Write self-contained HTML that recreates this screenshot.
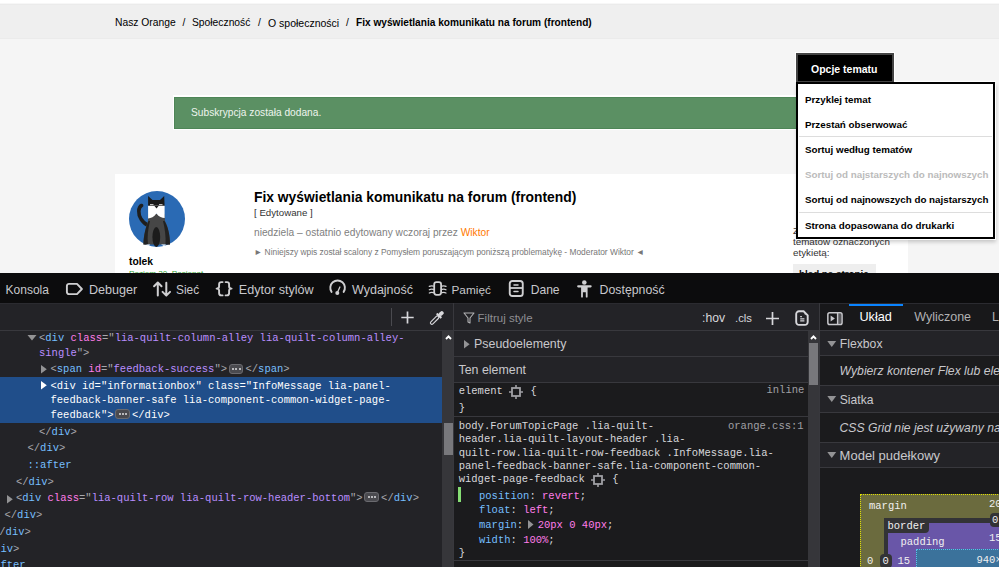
<!DOCTYPE html>
<html><head><meta charset="utf-8">
<style>
*{box-sizing:border-box;margin:0;padding:0}
html,body{width:999px;height:567px;overflow:hidden;background:#f5f5f5;position:relative;font-family:"Liberation Sans",sans-serif}
.a{position:absolute;white-space:pre}
.dd{position:absolute;left:805px;font-size:9.8px;font-weight:bold;line-height:12px;color:#000;white-space:pre}
.sep{position:absolute;left:799px;width:193px;height:1px;background:#ddd}
/* devtools */
#dt{position:absolute;left:0;top:273px;width:999px;height:294px;background:#232327;overflow:hidden}
.mono{font-family:"Liberation Mono",monospace}
.ml{position:absolute;font-family:"Liberation Mono",monospace;font-size:10.5px;line-height:14.5px;white-space:pre;color:#b1b1b3}
.ml .t{color:#75bfff}.ml .n{color:#ff7de9}.ml .v{color:#b98eff}.ml .p{color:#a8a8ad}.ml .w{color:#fff}
.bd{display:inline-block;vertical-align:top;margin:1.7px 2.5px 0 1.5px;width:14.5px;height:10px;border-radius:3px;background:#4a4a4f;border:1px solid #6a6a6f;position:relative}
.bd i{position:absolute;top:3px;width:2px;height:2px;border-radius:1px;background:#e0e0e2}
.bd i:nth-child(1){left:2.5px}.bd i:nth-child(2){left:5.75px}.bd i:nth-child(3){left:9px}
.rl{position:absolute;font-family:"Liberation Mono",monospace;font-size:10.5px;line-height:13.3px;white-space:pre;color:#d7d7db}
.rl.g{color:#a0a0a5}.rl .pn{color:#75bfff}.rl .pv{color:#ff7de9}
.bm{position:absolute;font-family:"Liberation Mono",monospace;font-size:10.5px;line-height:14px;white-space:pre;color:#f0f0f0}
.tb{position:absolute;top:8px;font-size:12px;line-height:15px;color:#c8c8cc;white-space:pre}
</style></head><body>
<!-- PAGE -->
<div class="a" style="left:0;top:0;width:999px;height:3px;background:#fff"></div>
<div class="a" style="left:0;top:3px;width:999px;height:1px;background:#f7f7f7"></div>
<div class="a" style="left:0;top:4px;width:999px;height:1px;background:#ebebeb"></div>
<div class="a" style="left:0;top:5px;width:999px;height:33px;background:#efefef"></div>
<div class="a" style="left:0;top:38px;width:999px;height:1px;background:#ebebeb"></div>
<div class="a" style="left:115px;top:17px;font-size:10.3px;line-height:12px;color:#000">Nasz Orange</div>
<div class="a" style="left:182.5px;top:17px;font-size:10.3px;line-height:12px;color:#000">/</div>
<div class="a" style="left:192px;top:17px;font-size:10.3px;line-height:12px;color:#000">Społeczność</div>
<div class="a" style="left:258px;top:17px;font-size:10.3px;line-height:12px;color:#000">/</div>
<div class="a" style="left:268px;top:16.5px;font-size:10.5px;line-height:12px;color:#000">O społeczności</div>
<div class="a" style="left:346px;top:17px;font-size:10.3px;line-height:12px;color:#000">/</div>
<div class="a" style="left:356px;top:17px;font-size:10.13px;line-height:12px;color:#000;font-weight:bold">Fix wyświetlania komunikatu na forum (frontend)</div>

<div class="a" style="left:173px;top:95px;width:630px;height:35px;background:#fff"></div>
<div class="a" style="left:174px;top:97px;width:629px;height:32px;background:#5b9063;border:1px solid #4e8557;border-right:none"></div>
<div class="a" style="left:191px;top:107px;font-size:10.2px;line-height:12px;color:#eef4ee">Subskrypcja została dodana.</div>

<div class="a" style="left:115px;top:174px;width:793px;height:99px;background:#fff"></div>
<svg class="a" style="left:129px;top:191px" width="56" height="56" viewBox="0 0 56 56">
<circle cx="28" cy="28" r="28" fill="#2a6ab4"/>
<path d="M12.6 14.5 C9 16 9 24 12 28 C14 31 16 33 18.5 34" stroke="#1e1e1e" stroke-width="3.6" fill="none" stroke-linecap="round"/>
<path d="M19 23 L35.5 23 L36 30 C39 36 41 44 41 53.5 L14.5 53.5 C14.5 44 17 36 19 30 Z" fill="#464646"/>
<path d="M14.5 53.5 C14.5 44 17 36 19.5 30 L21 30 C19 38 18 46 19 53.5 Z" fill="#222"/>
<path d="M41 53.5 C41 44 39 36 35.5 30 L34 30 C36 38 37 46 36.5 53.5 Z" fill="#222"/>
<ellipse cx="27.3" cy="46" rx="3.9" ry="10" fill="#1c1c1c"/>
<path d="M19.1 4.9 L23.5 9 L31 9 L35.2 4.9 L35.6 15 L19.1 15 Z" fill="#1a1a1a"/>
<path d="M19.1 14.8 L35.6 14.8 L35.6 27 C33 27 30 26 27.4 22.5 C25 26 22 27 19.1 27.5 Z" fill="#fff"/>
<path d="M25.5 15 L29.5 15 L27.5 17.5 Z" fill="#1a1a1a"/>
<rect x="21" y="13" width="3.5" height="1.2" fill="#bbb"/><rect x="30" y="13" width="3.5" height="1.2" fill="#bbb"/>
<path d="M17 53.5 L21 53.5 L20 55 Z M32 53.5 L37 53.5 L35 55 Z" fill="#fff"/>
</svg>
<div class="a" style="left:129px;top:256px;font-size:10.3px;line-height:12px;font-weight:bold;color:#000">tolek</div>
<div class="a" style="left:129px;top:269px;font-size:8.1px;line-height:10px;color:#2f9f2f">Poziom 20, Pasjonat</div>

<div class="a" style="left:254px;top:188.5px;font-size:13.85px;line-height:16px;font-weight:bold;color:#000">Fix wyświetlania komunikatu na forum (frontend)</div>
<div class="a" style="left:254px;top:207px;font-size:9.7px;line-height:12px;color:#333">[ Edytowane ]</div>
<div class="a" style="left:254px;top:226.5px;font-size:10.2px;line-height:12px;color:#808080">niedziela – ostatnio edytowany wczoraj przez <span style="color:#ff7900">Wiktor</span></div>
<div class="a" style="left:254px;top:247px;font-size:8.4px;line-height:10px;color:#777">► Niniejszy wpis został scalony z Pomysłem poruszającym poniższą problematykę - Moderator Wiktor ◄</div>

<div class="a" style="left:793px;top:225px;font-size:9.8px;line-height:11px;color:#333">Z
tematów oznaczonych
etykietą:</div>
<div class="a" style="left:793px;top:264px;width:83px;height:12px;background:#eee"></div>
<div class="a" style="left:799px;top:267.5px;font-size:9.8px;line-height:11px;font-weight:bold;color:#111">blad na stronie</div>

<!-- dropdown -->
<div class="a" style="left:796px;top:82px;width:199px;height:157px;background:#fff;border:2px solid #000;box-shadow:1px 1px 0 0 #fff,1px 3px 4px rgba(0,0,0,.2)"></div>
<div class="a" style="left:894px;top:81px;width:102px;height:1px;background:#fff"></div>
<div class="a" style="left:795px;top:52px;width:100px;height:30px;background:#fff"></div>
<div class="a" style="left:796px;top:53px;width:98px;height:29px;background:#000;border:2px solid #444;border-bottom:1px solid #444"></div>
<div class="a" style="left:811px;top:62.5px;font-size:10.5px;line-height:12px;font-weight:bold;color:#fff">Opcje tematu</div>
<div class="dd" style="top:93.5px">Przyklej temat</div>
<div class="dd" style="top:118.7px">Przestań obserwować</div>
<div class="sep" style="top:136px"></div>
<div class="dd" style="top:144px">Sortuj według tematów</div>
<div class="dd" style="top:169px;color:#bbb">Sortuj od najstarszych do najnowszych</div>
<div class="dd" style="top:194px">Sortuj od najnowszych do najstarszych</div>
<div class="sep" style="top:212px"></div>
<div class="dd" style="top:220px">Strona dopasowana do drukarki</div>

<div id="dt">
<!-- top toolbar -->
<div class="a" style="left:0;top:0;width:999px;height:30px;background:#0c0c0d"></div>
<div class="tb" style="left:5.6px;top:9.5px;font-size:12px">Konsola</div>
<svg class="a" style="left:65px;top:8.5px" width="19" height="14" viewBox="0 0 19 14"><path d="M4 1.9 H12 L16.9 7 L12 12.1 H4 A2.1 2.1 0 0 1 1.9 10 V4 A2.1 2.1 0 0 1 4 1.9 Z" fill="none" stroke="#cfcfd1" stroke-width="1.9" stroke-linejoin="round"/></svg>
<div class="tb" style="left:88.9px;top:9.5px;font-size:12.6px">Debuger</div>
<svg class="a" style="left:153px;top:8px" width="19" height="16" viewBox="0 0 19 16"><path d="M4.8 14.4 V1.8 M1.1 5.2 L4.8 1.5 L8.5 5.2 M13.3 1.8 V14.4 M9.6 10.9 L13.3 14.6 L17 10.9" fill="none" stroke="#cfcfd1" stroke-width="2" stroke-linecap="round" stroke-linejoin="round"/></svg>
<div class="tb" style="left:176px;top:9.5px;font-size:11.9px">Sieć</div>
<svg class="a" style="left:215px;top:7px" width="19" height="18" viewBox="0 0 19 18"><path d="M7.6 2.1 H6.3 Q4.1 2.1 4.1 4.3 V6.6 Q4.1 8.6 1.6 8.6 Q4.1 8.6 4.1 10.6 V13 Q4.1 15.4 6.3 15.4 H7.6 M10.6 2.1 H11.9 Q14.1 2.1 14.1 4.3 V6.6 Q14.1 8.6 16.6 8.6 Q14.1 8.6 14.1 10.6 V13 Q14.1 15.4 11.9 15.4 H10.6" fill="none" stroke="#cfcfd1" stroke-width="1.9" stroke-linecap="round" stroke-linejoin="round"/></svg>
<div class="tb" style="left:238.8px;top:9.5px;font-size:12.6px">Edytor stylów</div>
<svg class="a" style="left:328px;top:6px" width="20" height="18" viewBox="0 0 20 18"><path d="M3.55 12.9 A7.3 7.3 0 1 1 15.65 12.9" fill="none" stroke="#cfcfd1" stroke-width="1.9" stroke-linecap="round"/><path d="M11.9 8 L9.4 13.4" stroke="#cfcfd1" stroke-width="1.3" stroke-linecap="round"/><circle cx="9.3" cy="13.9" r="2" fill="#cfcfd1"/></svg>
<div class="tb" style="left:352px;top:9.5px;font-size:12.5px">Wydajność</div>
<svg class="a" style="left:428px;top:7px" width="19" height="18" viewBox="0 0 19 18"><rect x="6.2" y="2.2" width="6.9" height="12.6" rx="2.2" fill="none" stroke="#cfcfd1" stroke-width="1.8"/><path d="M1.3 6.4 Q3 5.4 5.4 6.1 M1.3 9.7 Q3 8.7 5.4 9.4 M1.3 13 Q3 12 5.4 12.7 M18 6.4 Q16.3 5.4 13.9 6.1 M18 9.7 Q16.3 8.7 13.9 9.4 M18 13 Q16.3 12 13.9 12.7" fill="none" stroke="#cfcfd1" stroke-width="1.3" stroke-linecap="round"/></svg>
<div class="tb" style="left:451.5px;top:9.5px;font-size:11.8px">Pamięć</div>
<svg class="a" style="left:508px;top:6px" width="17" height="19" viewBox="0 0 17 19"><rect x="1.75" y="1.95" width="13" height="15.1" rx="2.6" fill="none" stroke="#cfcfd1" stroke-width="1.9"/><path d="M1.8 9 H14.7" stroke="#cfcfd1" stroke-width="1.8"/><path d="M6 5.9 H10 M6 12.4 H10" stroke="#cfcfd1" stroke-width="1.5" stroke-linecap="round"/></svg>
<div class="tb" style="left:530.7px;top:9.5px;font-size:12.1px">Dane</div>
<svg class="a" style="left:576px;top:7px" width="17" height="18" viewBox="0 0 17 18"><circle cx="8.3" cy="2.5" r="2.3" fill="#cfcfd1"/><path d="M2.2 6.3 H14.6" stroke="#cfcfd1" stroke-width="2.2" stroke-linecap="round"/><path d="M5.1 6 H11.6 V16.7 A0.9 0.9 0 0 1 9.8 16.7 V12.3 H6.9 V16.7 A0.9 0.9 0 0 1 5.1 16.7 Z" fill="#cfcfd1"/></svg>
<div class="tb" style="left:599.6px;top:9.5px;font-size:12.3px">Dostępność</div>

<!-- markup pane -->
<div class="a" style="left:0;top:30px;width:453px;height:28px;background:#232327;border-top:1px solid #2b2b30;border-bottom:1px solid #38383d"></div>
<div class="a" style="left:391px;top:35px;width:1px;height:18px;background:#4a4a4f"></div>
<svg class="a" style="left:400px;top:37px" width="15" height="15" viewBox="0 0 15 15"><path d="M7.5 1.5 V13.5 M1.3 7.5 H13.7" stroke="#d7d7db" stroke-width="1.7"/></svg>
<svg class="a" style="left:427px;top:36px" width="17" height="17" viewBox="0 0 17 17"><g transform="translate(11.5,7.3) rotate(45)"><rect x="-1.45" y="0.2" width="2.9" height="10.6" rx="1.45" fill="none" stroke="#d7d7db" stroke-width="1.15"/><rect x="-3.3" y="-1.9" width="6.6" height="2.3" rx="0.8" fill="#d7d7db"/><rect x="-1.9" y="-6.6" width="3.8" height="5.2" rx="1.9" fill="#d7d7db"/></g></svg>
<div class="a" style="left:442px;top:58px;width:11px;height:236px;background:#36363a"></div>
<div class="a" style="left:444px;top:150px;width:9px;height:32px;background:#78787c"></div>
<svg class="a" style="left:445px;top:61px" width="7" height="7" viewBox="0 0 7 7"><path d="M1 5 L3.5 2.3 L6 5" fill="none" stroke="#fff" stroke-width="1.9"/></svg>
<div class="a" style="left:453px;top:30px;width:1px;height:264px;background:#38383d"></div>

<!-- rules pane -->
<div class="a" style="left:454px;top:30px;width:365px;height:28px;background:#232327;border-top:1px solid #2b2b30;border-bottom:1px solid #38383d"></div>
<svg class="a" style="left:463px;top:39px" width="12" height="12" viewBox="0 0 12 12"><path d="M1 1 H11 L7 6 V11 L5 10 V6 Z" fill="none" stroke="#b1b1b3" stroke-width="1.1" stroke-linejoin="round"/></svg>
<div class="tb" style="left:477.6px;top:37.5px;font-size:11.5px;color:#8f8f93">Filtruj style</div>
<div class="tb" style="left:702px;top:37.5px;font-size:12.2px;color:#d7d7db">:hov</div>
<div class="tb" style="left:735px;top:37.5px;font-size:11.3px;color:#d7d7db">.cls</div>
<svg class="a" style="left:765px;top:38px" width="15" height="15" viewBox="0 0 15 15"><path d="M7.5 1 V14 M1 7.5 H14" stroke="#d7d7db" stroke-width="1.7"/></svg>
<svg class="a" style="left:795px;top:37px" width="14" height="16" viewBox="0 0 14 16"><path d="M4 1.3 H8.6 L12.7 5.4 V12.1 A2.8 2.8 0 0 1 9.9 14.9 H4 A2.8 2.8 0 0 1 1.2 12.1 V4.1 A2.8 2.8 0 0 1 4 1.3 Z" fill="none" stroke="#d7d7db" stroke-width="1.9"/><path d="M9.6 2.4 L11.6 4.4 L9.6 4.4 Z" fill="#d7d7db"/><path d="M5.2 6.6 H6.9 M5.2 8.8 H9.4 M5.2 10.9 H9.4" stroke="#d7d7db" stroke-width="1.2"/></svg>
<div class="a" style="left:808px;top:58px;width:11px;height:236px;background:#36363a"></div>
<div class="a" style="left:809px;top:70px;width:9px;height:42px;background:#78787c"></div>
<svg class="a" style="left:810px;top:61px" width="7" height="7" viewBox="0 0 7 7"><path d="M1 5 L3.5 2.3 L6 5" fill="none" stroke="#fff" stroke-width="1.9"/></svg>
<div class="a" style="left:819px;top:30px;width:1px;height:264px;background:#38383d"></div>

<!-- markup content -->
<div class="a" style="left:0;top:58px;width:442px;height:236px;background:#232327;overflow:hidden">
<div class="a" style="left:0;top:45.8px;width:442px;height:46px;background:#204e8a"></div>
<svg class="a" style="left:27px;top:4.0px" width="10" height="6" viewBox="0 0 10 6"><path d="M0.5 0 H9.5 L5 5.5 Z" fill="#939395"/></svg>
<svg class="a" style="left:41px;top:34.0px" width="6" height="9" viewBox="0 0 6 9"><path d="M0 0 V8.5 L5.8 4.25 Z" fill="#939395"/></svg>
<svg class="a" style="left:41px;top:50.3px" width="6" height="9" viewBox="0 0 6 9"><path d="M0 0 V8.5 L5.8 4.25 Z" fill="#fff"/></svg>
<svg class="a" style="left:6.5px;top:163.6px" width="6" height="9" viewBox="0 0 6 9"><path d="M0 0 V8.5 L5.8 4.25 Z" fill="#939395"/></svg>
<div class="ml" style="left:39px;top:-0.2px"><span class="p">&lt;</span><span class="t">div</span><span class="p"> </span><span class="n">class</span><span class="p">="</span><span class="v">lia-quilt-column-alley lia-quilt-column-alley-</span></div>
<div class="ml" style="left:39px;top:14.5px"><span class="v">single</span><span class="p">"&gt;</span></div>
<div class="ml" style="left:50.5px;top:31.1px"><span class="p">&lt;</span><span class="t">span</span><span class="p"> </span><span class="n">id</span><span class="p">="</span><span class="v">feedback-success</span><span class="p">"&gt;</span><span class="bd"><i></i><i></i><i></i></span><span class="p">&lt;/</span><span class="t">span</span><span class="p">&gt;</span></div>
<div class="ml" style="left:50.5px;top:47.8px"><span class="w">&lt;div id="informationbox" class="InfoMessage lia-panel-</span></div>
<div class="ml" style="left:50.5px;top:62.2px"><span class="w">feedback-banner-safe lia-component-common-widget-page-</span></div>
<div class="ml" style="left:50.5px;top:76.6px"><span class="w">feedback"&gt;</span><span class="bd"><i></i><i></i><i></i></span><span class="w">&lt;/div&gt;</span></div>
<div class="ml" style="left:39px;top:93.7px"><span class="p">&lt;/</span><span class="t">div</span><span class="p">&gt;</span></div>
<div class="ml" style="left:27.5px;top:110.3px"><span class="p">&lt;/</span><span class="t">div</span><span class="p">&gt;</span></div>
<div class="ml" style="left:27.5px;top:126.9px"><span class="t">::after</span></div>
<div class="ml" style="left:16px;top:144.0px"><span class="p">&lt;/</span><span class="t">div</span><span class="p">&gt;</span></div>
<div class="ml" style="left:16px;top:159.7px"><span class="p">&lt;</span><span class="t">div</span><span class="p"> </span><span class="n">class</span><span class="p">="</span><span class="v">lia-quilt-row lia-quilt-row-header-bottom</span><span class="p">"&gt;</span><span class="bd"><i></i><i></i><i></i></span><span class="p">&lt;/</span><span class="t">div</span><span class="p">&gt;</span></div>
<div class="ml" style="left:4.5px;top:177.3px"><span class="p">&lt;/</span><span class="t">div</span><span class="p">&gt;</span></div>
<div class="ml" style="left:-7px;top:194.0px"><span class="p">&lt;/</span><span class="t">div</span><span class="p">&gt;</span></div>
<div class="ml" style="left:-18.5px;top:210.5px"><span class="p">&lt;/</span><span class="t">div</span><span class="p">&gt;</span></div>
<div class="ml" style="left:-18.5px;top:226.6px"><span class="t">::after</span></div>
</div>
<!-- rules content -->
<div class="a" style="left:454px;top:58px;width:354px;height:236px;background:#1b1b1d;overflow:hidden">
<div class="a" style="left:0;top:0;width:354px;height:26px;background:#232327;border-bottom:1px solid #38383d"></div>
<svg class="a" style="left:9.5px;top:9px" width="6" height="9" viewBox="0 0 6 9"><path d="M0 0 V8.6 L5.6 4.3 Z" fill="#939395"/></svg>
<div class="tb" style="left:20.1px;top:6.3px;font-size:12.4px">Pseudoelementy</div>
<div class="a" style="left:0;top:26px;width:354px;height:26px;background:#232327;border-bottom:1px solid #38383d"></div>
<div class="tb" style="left:4.5px;top:31.7px;font-size:12.4px">Ten element</div>
<div class="a" style="left:0;top:85px;width:354px;height:1px;background:#38383d"></div>
<div class="a" style="left:0;top:229px;width:354px;height:1px;background:#38383d"></div>
<div class="rl" style="left:4.7px;top:53.7px">element <svg width="14" height="14" viewBox="0 0 14 14" style="vertical-align:-1px;margin:-4px 1px -4px 0"><rect x="3" y="3" width="8" height="8" fill="none" stroke="#a0a0a5" stroke-width="1.8"/><path d="M7 0 V3 M7 11 V14 M0 7 H3 M11 7 H14" stroke="#a0a0a5" stroke-width="1.6"/></svg> {</div>
<div class="rl" style="left:4.7px;top:71.4px">}</div>
<div class="rl g" style="left:312.5px;top:53.4px">inline</div>
<div class="rl" style="left:4.7px;top:89.1px">body.ForumTopicPage .lia-quilt-
header.lia-quilt-layout-header .lia-
quilt-row.lia-quilt-row-feedback .InfoMessage.lia-
panel-feedback-banner-safe.lia-component-common-
widget-page-feedback <svg width="14" height="14" viewBox="0 0 14 14" style="vertical-align:-1px;margin:-4px 1px -4px 0"><rect x="3" y="3" width="8" height="8" fill="none" stroke="#a0a0a5" stroke-width="1.8"/><path d="M7 0 V3 M7 11 V14 M0 7 H3 M11 7 H14" stroke="#a0a0a5" stroke-width="1.6"/></svg> {</div>
<div class="rl g" style="left:274px;top:88.5px">orange.css:1</div>
<div class="a" style="left:4px;top:156px;width:3px;height:15px;background:#86de74"></div>
<div class="rl" style="left:25px;top:158.9px"><span class="pn">position</span>: <span class="pv">revert</span>;</div>
<div class="rl" style="left:25px;top:173.0px"><span class="pn">float</span>: <span class="pv">left</span>;</div>
<div class="rl" style="left:25px;top:187.5px"><span class="pn">margin</span>:<svg width="9" height="9" viewBox="0 0 9 9" style="vertical-align:-1px;margin-left:3px;margin-right:2.6px"><path d="M2 0 V9 L7.5 4.5 Z" fill="#939395"/></svg><span class="pv">20px 0 40px</span>;</div>
<div class="rl" style="left:25px;top:202.7px"><span class="pn">width</span>: <span class="pv">100%</span>;</div>
<div class="rl" style="left:4.7px;top:215.8px">}</div>
</div>
<!-- sidebar content -->
<div class="a" style="left:820px;top:30px;width:179px;height:264px;background:#1b1b1d;overflow:hidden">
<div class="a" style="left:0;top:0;width:179px;height:28px;background:#18181a;border-top:1px solid #2b2b30;border-bottom:1px solid #38383d"></div>
<div class="a" style="left:29px;top:1px;width:54px;height:2px;background:#0a84ff"></div>
<svg class="a" style="left:6.5px;top:8.5px" width="16" height="14" viewBox="0 0 16 14"><rect x="10.8" y="1.5" width="3.4" height="10.2" fill="#58585c"/><rect x="0.85" y="0.85" width="14.2" height="11.6" rx="1.8" fill="none" stroke="#c8c8cc" stroke-width="1.5"/><path d="M10.6 1 V12.3" stroke="#c8c8cc" stroke-width="1.4"/><path d="M3.6 3.6 V9.4 L7.9 6.5 Z" fill="#c8c8cc"/></svg>
<div class="tb" style="left:39.4px;top:7.2px;font-size:12.7px;color:#fff">Układ</div>
<div class="tb" style="left:94.2px;top:7.2px;font-size:12.5px;color:#b1b1b3">Wyliczone</div>
<div class="tb" style="left:172px;top:7.2px;font-size:12.5px;color:#b1b1b3">L</div>
<div class="a" style="left:0;top:28px;width:179px;height:25px;background:#232327;border-bottom:1px solid #38383d"></div>
<svg class="a" style="left:6.5px;top:38px" width="10" height="6" viewBox="0 0 10 6"><path d="M0.3 0 H9.2 L4.75 5.9 Z" fill="#939395"/></svg>
<div class="tb" style="left:19.8px;top:33.6px;font-size:12.2px">Flexbox</div>
<div class="tb" style="left:19.5px;top:61.3px;font-size:12.2px;font-style:italic">Wybierz kontener Flex lub element, aby kontynuować.</div>
<div class="a" style="left:0;top:82px;width:179px;height:28px;background:#232327;border-top:1px solid #38383d;border-bottom:1px solid #38383d"></div>
<svg class="a" style="left:6.5px;top:93px" width="10" height="6" viewBox="0 0 10 6"><path d="M0.3 0 H9.2 L4.75 5.9 Z" fill="#939395"/></svg>
<div class="tb" style="left:19.8px;top:89.8px;font-size:12.1px">Siatka</div>
<div class="tb" style="left:19.5px;top:118.4px;font-size:12.2px;font-style:italic">CSS Grid nie jest używany na tej stronie</div>
<div class="a" style="left:0;top:139px;width:179px;height:26px;background:#232327;border-top:1px solid #38383d;border-bottom:1px solid #38383d"></div>
<svg class="a" style="left:6.5px;top:149px" width="10" height="6" viewBox="0 0 10 6"><path d="M0.3 0 H9.2 L4.75 5.9 Z" fill="#939395"/></svg>
<div class="tb" style="left:19.6px;top:144.6px;font-size:13px">Model pudełkowy</div>
<!-- box model -->
<div class="a" style="left:40px;top:191px;width:200px;height:120px;background:#6b6b3e;border:1px dotted #e0e000"></div>
<div class="bm" style="left:49px;top:196.0px">margin</div>
<div class="bm" style="left:169px;top:193.5px">20</div>
<div class="a" style="left:63.5px;top:215px;width:180px;height:100px;background:#333336"></div>
<div class="a" style="left:68px;top:219.5px;width:180px;height:100px;background:#6956a8"></div>
<div class="a" style="left:63.5px;top:215px;width:45.5px;height:14.5px;background:#333336;border-radius:0 0 4px 0"></div>
<div class="bm" style="left:67.5px;top:215.5px">border</div>
<div class="a" style="left:170px;top:210px;width:14px;height:13.5px;background:#333336;border-radius:4px"></div>
<div class="bm" style="left:172px;top:209.8px">0</div>
<div class="bm" style="left:80.5px;top:231.5px">padding</div>
<div class="bm" style="left:169px;top:227.5px">15</div>
<div class="a" style="left:95.5px;top:246px;width:120px;height:60px;background:#3b729b;border:1px dotted #5bc0eb"></div>
<div class="bm" style="left:47px;top:250.7px">0</div>
<div class="a" style="left:60px;top:250.5px;width:12px;height:14px;background:#333336;border-radius:4px"></div>
<div class="bm" style="left:62.5px;top:250.7px">0</div>
<div class="bm" style="left:77.5px;top:250.7px">15</div>
<div class="bm" style="left:156.5px;top:250.0px">940×</div>
</div>

</div>
</body></html>
